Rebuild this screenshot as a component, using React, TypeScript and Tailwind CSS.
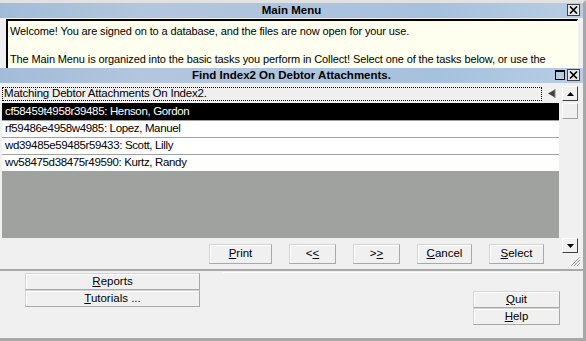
import React from 'react';

const rows = [
  'cf58459t4958r39485: Henson, Gordon',
  'rf59486e4958w4985: Lopez, Manuel',
  'wd39485e59485r59433: Scott, Lilly',
  'wv58475d38475r49590: Kurtz, Randy',
];

const titleBg =
  'bg-[linear-gradient(90deg,#a2bcd8_0%,#b3c6dd_25%,#aec4dd_50%,#a6c1dd_75%,#b8cde4_100%)]';

const CloseBox = () => (
  <div className="w-[13px] h-[12px] border border-[#404040] bg-[#e8e8e8] flex items-center justify-center">
    <svg width="9" height="8" viewBox="0 0 9 8">
      <path d="M1 0.5 L8 7.5 M8 0.5 L1 7.5" stroke="#000" strokeWidth="1.6" />
    </svg>
  </div>
);

const MaxBox = () => (
  <div className="w-[12px] h-[12px] flex items-center justify-center">
    <div className="w-[10px] h-[10px] border border-[#000] border-t-2" />
  </div>
);

const TitleBar = ({ title, max }: { title: string; max?: boolean }) => (
  <div className={`h-[15px] ${titleBg} relative flex items-center justify-center`}>
    <span className="text-[11.5px] font-bold text-black leading-none">{title}</span>
    <div className="absolute right-[3px] top-[1px] flex gap-[1px]">
      {max && <MaxBox />}
      <CloseBox />
    </div>
  </div>
);

const Btn = ({ children, className = '' }: { children: React.ReactNode; className?: string }) => (
  <div
    className={`flex items-center justify-center text-[11.5px] leading-none text-black bg-[#f0f0f0] border border-t-[#d4d4d4] border-l-[#d4d4d4] border-b-[#a8a8a8] border-r-[#a8a8a8] shadow-[inset_1px_1px_0_#ffffff] ${className}`}
  >
    {children}
  </div>
);

const ArrowBtn = ({ down }: { down?: boolean }) => (
  <div className="w-[16px] h-[15px] bg-[#f0f0f0] border border-t-white border-l-white border-b-[#404040] border-r-[#404040] flex items-center justify-center">
    <svg width="7" height="4" viewBox="0 0 7 4">
      <path d={down ? 'M0 0 L7 0 L3.5 4 Z' : 'M0 4 L7 4 L3.5 0 Z'} fill="#000" />
    </svg>
  </div>
);

export default function App() {
  return (
    <div className="w-[586px] h-[341px] bg-[#f0f0f0] relative overflow-hidden border-t-[3px] border-t-[#e2e2e2] border-r-[3px] border-r-[#a8a8a8] border-b-[3px] border-b-[#a8a8a8] flex flex-col font-['Liberation_Sans',Arial,sans-serif]">
      {/* Main Menu window */}
      <TitleBar title="Main Menu" />
      <div className="mt-[1px] ml-[6px] mr-[5px] h-[249px] bg-[#ffffef] border-t-2 border-l-2 border-t-[#000] border-l-[#000] border-b border-r border-b-white border-r-white pl-[2px] pr-[24px] pt-[3px] text-[11px] leading-[14px] text-black tracking-[-0.12px]">
        <p>Welcome! You are signed on to a database, and the files are now open for your use.</p>
        <p className="h-[14px]" />
        <p>
          The Main Menu is organized into the basic tasks you perform in Collect! Select one of the tasks below, or use the
          Menu at the top of your window to access information and tools.
        </p>
      </div>
      <div className="mt-[4px] ml-[223px] w-[337px] h-[1px] bg-white" />
      <div className="flex justify-between pl-[25px] pr-[23px]">
        <div className="flex flex-col">
          <Btn className="w-[175px] h-[17px]">
            <span><u>R</u>eports</span>
          </Btn>
          <Btn className="w-[175px] h-[17px]">
            <span><u>T</u>utorials ...</span>
          </Btn>
        </div>
        <div className="flex flex-col mt-[18px]">
          <Btn className="w-[87px] h-[17px]">
            <span><u>Q</u>uit</span>
          </Btn>
          <Btn className="w-[87px] h-[17px]">
            <span><u>H</u>elp</span>
          </Btn>
        </div>
      </div>

      {/* Find window overlapping the Main Menu */}
      <div className="absolute left-0 top-[65px] w-[583px] h-[203px] bg-[#f0f0f0] border-b-[2px] border-b-[#a8a8a8] flex flex-col">
        <TitleBar title="Find Index2 On Debtor Attachments." max />
        <div className="flex flex-1 pt-[3px]">
          <div className="flex flex-col w-[559px] pl-[2px]">
            <div className="h-[15px] flex items-center">
              <div className="w-[540px] h-[14px] border border-dotted border-[#000] bg-[#efefef] flex items-center pl-[1px] text-[11.5px] leading-none tracking-[-0.2px]">
                Matching Debtor Attachments On Index2.
              </div>
              <svg width="10" height="9" viewBox="0 0 10 9" className="ml-[5px]">
                <path d="M1 4.5 L8 0.5 L8 8.5 Z" fill="#404040" />
                <path d="M8 0 L8 9" stroke="#808080" strokeWidth="1" />
              </svg>
            </div>
            <div className="mt-[2px] bg-white">
              {rows.map((r, i) => (
                <div
                  key={r}
                  className={`h-[17px] flex items-center pl-[3px] text-[11.5px] leading-none tracking-[-0.35px] ${
                    i === 0 ? 'bg-black text-white' : 'bg-white text-black border-t border-t-[#a0a0a0]'
                  }`}
                >
                  {r}
                </div>
              ))}
            </div>
            <div className="h-[67px] bg-[#a0a2a0]" />
            <div className="flex items-center pl-[207px] gap-[17px] mt-[6px]">
              <Btn className="w-[63px] h-[20px]"><span><u>P</u>rint</span></Btn>
              <Btn className="w-[47px] h-[20px]"><span>&lt;<u>&lt;</u></span></Btn>
              <Btn className="w-[47px] h-[20px]"><span>&gt;<u>&gt;</u></span></Btn>
              <Btn className="w-[55px] h-[20px]"><span><u>C</u>ancel</span></Btn>
              <Btn className="w-[55px] h-[20px]"><span><u>S</u>elect</span></Btn>
            </div>
          </div>
          <div className="w-[24px] flex flex-col items-start pl-[3px]">
            <ArrowBtn />
            <div className="mt-[2px] w-[16px] h-[16px] bg-[#f0f0f0] border border-t-white border-l-white border-b-[#a0a0a0] border-r-[#a0a0a0]" />
            <div className="flex-1" />
            <ArrowBtn down />
            <svg width="12" height="12" viewBox="0 0 12 12" className="ml-[7px] mt-[2px] mb-[2px]">
              <path d="M11 2 L2 11 M11 5 L5 11 M11 8 L8 11" stroke="#a0a0a0" strokeWidth="1" />
              <path d="M11 3 L3 11 M11 6 L6 11 M11 9 L9 11" stroke="#ffffff" strokeWidth="1" />
            </svg>
          </div>
        </div>
      </div>
    </div>
  );
}
